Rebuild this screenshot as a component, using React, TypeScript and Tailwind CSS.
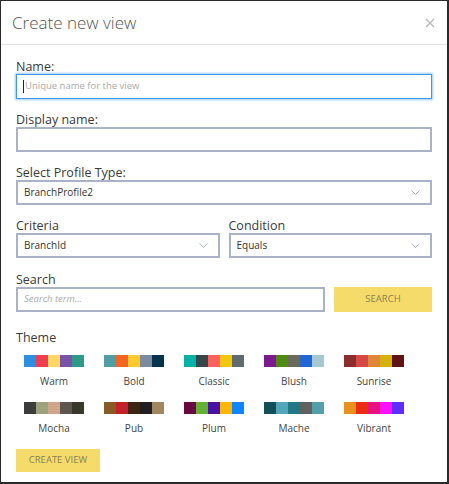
import React from "react";

const themes: { name: string; colors: string[] }[] = [
  { name: "Warm", colors: ["#2d8fe0", "#ef3e52", "#fed766", "#7a53a8", "#2e9a8a"] },
  { name: "Bold", colors: ["#4f9ea6", "#f26522", "#fdca2f", "#7c8aa0", "#06344f"] },
  { name: "Classic", colors: ["#00b2a7", "#374649", "#fd625e", "#f2c80f", "#5f6b6d"] },
  { name: "Blush", colors: ["#7b1a8f", "#4e8a12", "#6a6a5a", "#2166d2", "#a6c9d1"] },
  { name: "Sunrise", colors: ["#8b2d2f", "#d64745", "#e0863a", "#d5b10b", "#5e1414"] },
  { name: "Mocha", colors: ["#3c3c3c", "#9ea27a", "#cfa68a", "#5c5552", "#38382a"] },
  { name: "Pub", colors: ["#8a5a24", "#c4212b", "#3f2613", "#221e1f", "#a38560"] },
  { name: "Plum", colors: ["#6a0a42", "#63b134", "#4a11a6", "#f9b700", "#0d86ff"] },
  { name: "Mache", colors: ["#11505b", "#51a5b9", "#237888", "#616161", "#559eac"] },
  { name: "Vibrant", colors: ["#e8901a", "#ec2b13", "#e9117e", "#fe11f6", "#5c2dfd"] },
];

function Chevron() {
  return (
    <svg width="9" height="5" viewBox="0 0 9 5" className="shrink-0">
      <path d="M0.5 0.5 L4.5 4.5 L8.5 0.5" fill="none" stroke="#b3bac8" strokeWidth="1" />
    </svg>
  );
}

function Select({ value }: { value: string }) {
  return (
    <div className="flex h-[25px] items-center justify-between border-2 border-[#a9b3c5] pl-[6px] pr-[10px]">
      <span className="text-[10px] text-[#333]">{value}</span>
      <Chevron />
    </div>
  );
}

function Label({ children }: { children: React.ReactNode }) {
  return <div className="h-[16px] text-[12.5px] leading-[17px] text-[#3a3a3a]">{children}</div>;
}

export default function App() {
  return (
    <div
      className="h-[484px] w-[449px] border-t border-l border-r-2 border-b-2 border-[#2b2b2b] bg-white"
      style={{ fontFamily: '"Open Sans", "Liberation Sans", sans-serif' }}
    >
      <div className="flex h-[44px] items-center justify-between border-b border-[#e3e3e3] pl-[11px] pr-[12px]">
        <span className="text-[17px] font-light text-[#555]">Create new view</span>
        <svg width="10" height="10" viewBox="0 0 10 10">
          <path d="M1 1 L9 9 M9 1 L1 9" stroke="#b8b8b8" strokeWidth="1.3" />
        </svg>
      </div>
      <div className="px-[15px] pt-[13px]">
        <div className="mb-[12px]">
          <Label>Name:</Label>
          <div className="flex h-[25px] items-center border border-[#3f98e8] pl-[6px] shadow-[0_0_2px_1px_#9fcaf3]">
            <span className="mr-[1px] h-[13px] w-px bg-[#222]" />
            <span className="text-[9.5px] text-[#aaa]">Unique name for the view</span>
          </div>
        </div>
        <div className="mb-[12px]">
          <Label>Display name:</Label>
          <div className="h-[25px] border-2 border-[#a9b3c5]" />
        </div>
        <div className="mb-[12px]">
          <Label>Select Profile Type:</Label>
          <Select value="BranchProfile2" />
        </div>
        <div className="mb-[13px] flex gap-[9px]">
          <div className="flex-1">
            <Label>Criteria</Label>
            <Select value="BranchId" />
          </div>
          <div className="flex-1">
            <Label>Condition</Label>
            <Select value="Equals" />
          </div>
        </div>
        <div className="mb-[17px]">
          <Label>Search</Label>
          <div className="flex gap-[9px]">
            <div className="flex h-[25px] flex-1 items-center border-2 border-[#a9b3c5] pl-[6px]">
              <span className="text-[9.5px] italic text-[#aaa]">Search term...</span>
            </div>
            <div className="flex h-[25px] w-[98px] items-center justify-center bg-[#f5dc6a] text-[9.5px] text-[#8a8055]">
              SEARCH
            </div>
          </div>
        </div>
        <Label>Theme</Label>
        <div className="mt-[10px] grid grid-cols-[repeat(5,60px)] gap-x-[20px] gap-y-[14px] pl-[8px]">
          {themes.map((t) => (
            <div key={t.name} className="flex flex-col items-center">
              <div className="flex h-[12px] w-[60px]">
                {t.colors.map((c, i) => (
                  <div key={i} className="h-full flex-1" style={{ backgroundColor: c }} />
                ))}
              </div>
              <div className="mt-[7px] h-[14px] text-[10px] leading-[14px] text-[#444]">{t.name}</div>
            </div>
          ))}
        </div>
        <div className="mt-[14px] flex h-[23px] w-[84px] items-center justify-center bg-[#f5dc6a] text-[9.5px] text-[#8a8055]">
          CREATE VIEW
        </div>
      </div>
    </div>
  );
}
